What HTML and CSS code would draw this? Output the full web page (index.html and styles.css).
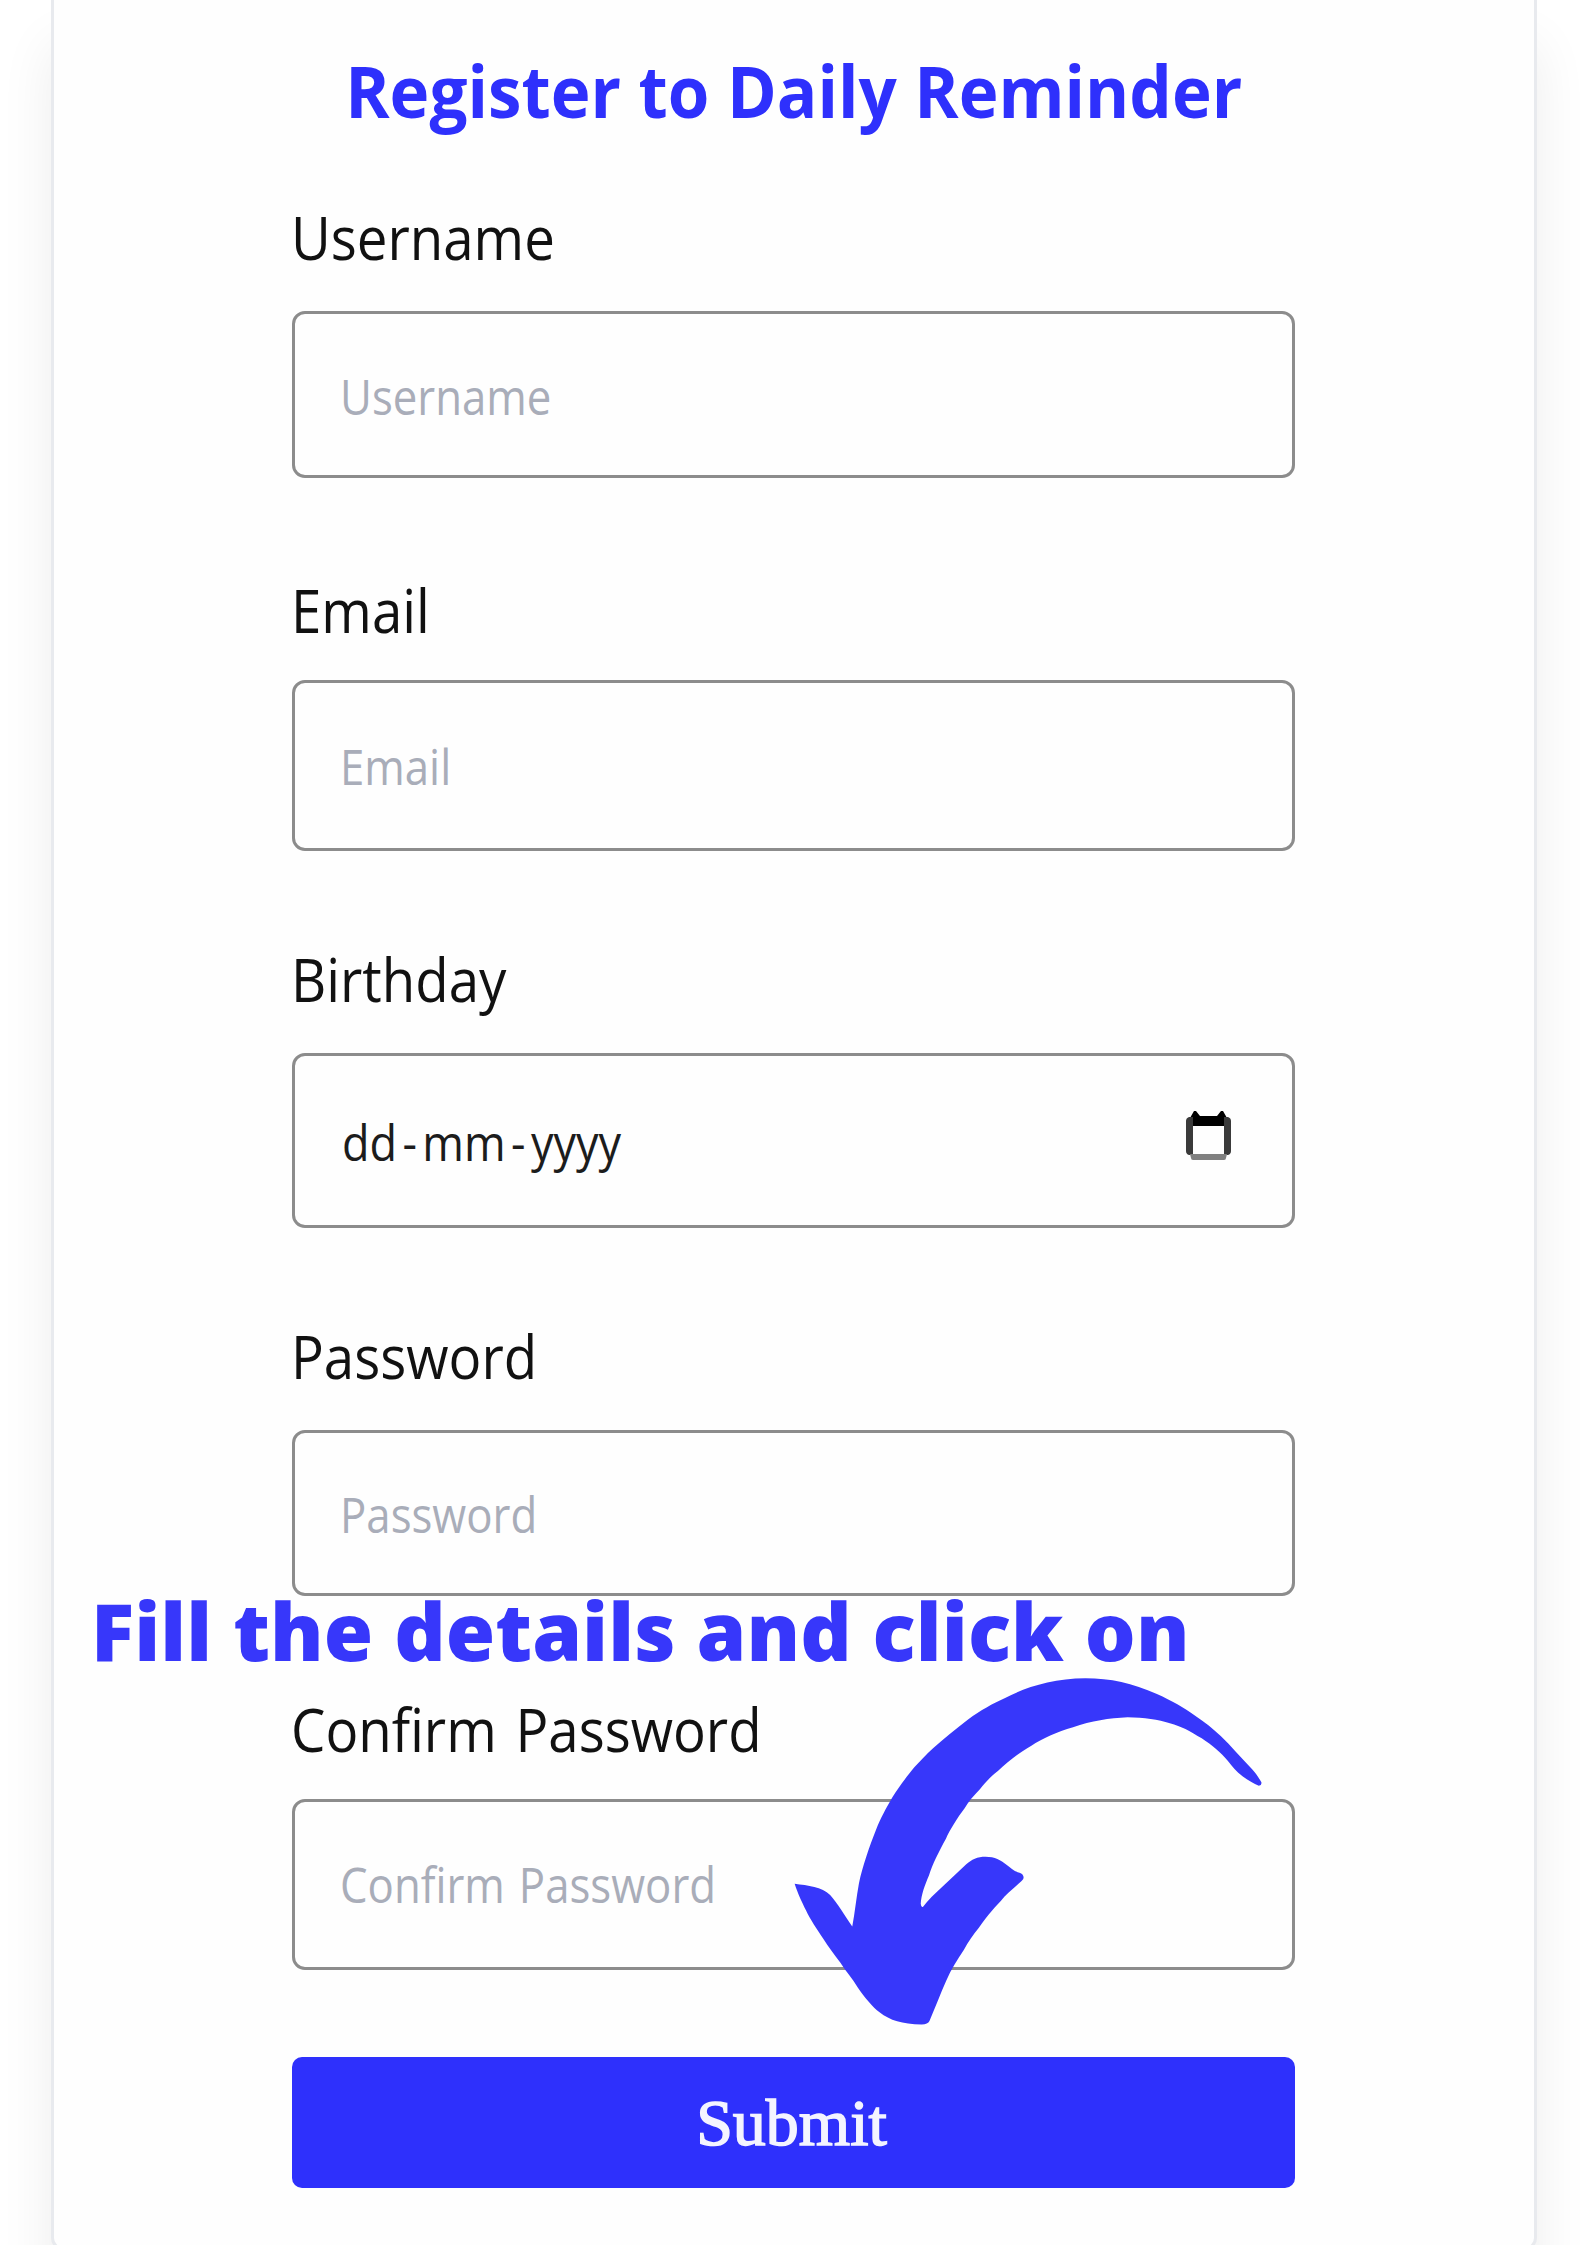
FILE: index.html
```html
<!DOCTYPE html>
<html lang="en">
<head>
<meta charset="utf-8">
<title>Register to Daily Reminder</title>
<link rel="stylesheet" href="styles.css">
</head>
<body>
<main class="card">
  <h1 class="title"><span>Register to Daily Reminder</span></h1>
  <form class="form">
    <div class="field username">
      <label class="label"><span>Username</span></label>
      <div class="input"><span class="placeholder">Username</span></div>
    </div>
    <div class="field email">
      <label class="label"><span>Email</span></label>
      <div class="input"><span class="placeholder">Email</span></div>
    </div>
    <div class="field birthday">
      <label class="label"><span>Birthday</span></label>
      <div class="input">
        <span class="date">dd<i>-</i>mm<i>-</i>yyyy</span>
        <svg class="calendar" viewBox="0 0 47 51" aria-hidden="true">
          <path d="M5 8L9 1h2l4 5h17l4-5h2l4 7v8H5z" fill="#000"/>
          <path d="M4 7h4v38H4q-3-1-3-4V11q0-3 3-4zM39 7h4q3 1 3 4v30q0 3-3 4h-4z" fill="#3a3a3a"/>
          <path d="M5 44h37l-1 4q0 2-2 2H8q-2 0-2-2z" fill="#808080"/>
        </svg>
      </div>
    </div>
    <div class="field password">
      <label class="label"><span>Password</span></label>
      <div class="input"><span class="placeholder">Password</span></div>
    </div>
    <div class="field confirm">
      <label class="label"><span>Confirm Password</span></label>
      <div class="input"><span class="placeholder">Confirm Password</span></div>
    </div>
    <button class="submit" type="button"><span>Submit</span></button>
  </form>
</main>
<p class="hint">Fill the details and click on</p>
<svg class="arrow" viewBox="20 260 930 810" preserveAspectRatio="none" aria-hidden="true">
  <path fill="#3737fa" d="M29 740C55 744 82 747 98 766C112 784 126 813 141 838C146 807 149 771 154 739C161 700 174 656 187 617C197 587 206 569 219 542C231 519 248 493 262 473C274 458 285 444 298 430C318 409 342 386 366 364C391 343 413 328 438 315C475 292 530 270 594 270C643 270 685 281 733 306C763 322 784 336 808 356C826 370 842 385 857 402C868 414 876 425 888 440L918 478C925 487 930 496 936 508Q937 515 931 516C915 507 902 498 891 486C881 475 873 461 865 451C851 434 834 416 812 402C785 380 741 360 676 359C640 361 606 367 570 382C539 392 510 409 489 424C463 442 444 460 424 482C408 497 399 509 389 524C376 540 367 552 359 568C346 588 331 616 323 637C309 667 297 695 290 721C282 743 275 765 274 786Q275 796 279 792C288 778 302 762 315 748L362 696C373 684 384 678 400 678C418 678 430 686 440 696C449 704 456 712 466 715C474 718 477 727 470 734C455 750 440 764 430 779C411 803 399 820 387 841C376 857 366 874 358 891C345 914 333 936 324 961C313 990 302 1024 291 1054Q288 1062 276 1062C237 1061 215 1053 194 1034C181 1023 164 999 152 978C142 958 128 940 118 921C106 902 95 886 84 865C73 845 59 822 51 801C43 781 36 765 29 740Z"/>
</svg>
</body>
</html>
```
FILE: styles.css
```css
* { box-sizing: border-box; }

body {
  position: relative;
  margin: 0;
  height: 2245px;
  overflow: hidden;
  background: #fff;
  font-family: "Open Sans", "Noto Sans", sans-serif;
}

.card {
  width: 1486px;
  height: 2266px;
  margin: -16px 0 0 51px;
  padding-top: 17px;
  border: 3px solid #e8eaee;
  border-radius: 12px;
  background: #fefefe;
  box-shadow: 0 60px 54px rgba(0, 0, 0, 0.075);
}

.title {
  height: 192px;
  margin: 0;
  padding-top: 36px;
  font-size: 72px;
  font-weight: 700;
  line-height: 100px;
  text-align: center;
  white-space: nowrap;
  color: #2e30fc;
}

.title span { display: inline-block; transform: scaleX(0.935); }

.form {
  display: flex;
  flex-direction: column;
  width: 1003px;
  margin-left: 238px;
}

.field { display: flex; flex-direction: column; }
.username { gap: 35px; }
.email { gap: 31px; margin-top: 90px; }
.birthday { gap: 35px; margin-top: 87px; }
.password { gap: 35px; margin-top: 87px; }
.confirm { gap: 31px; margin-top: 92px; }

.label {
  height: 80px;
  font-size: 60px;
  line-height: 82px;
  white-space: nowrap;
  word-spacing: 5px;
  color: #111;
}

.label span,
.placeholder,
.date {
  display: inline-block;
  transform-origin: 0 50%;
}

.label span { transform: translateX(-1px) scaleX(0.91); }

.input {
  display: flex;
  align-items: center;
  justify-content: space-between;
  height: 167px;
  margin-bottom: 1px;
  padding: 2px 60px 0 45px;
  border: 3px solid #8c8c8c;
  border-radius: 13px;
  font-size: 50px;
  white-space: nowrap;
}

.email .input { height: 171px; margin-bottom: 0; padding-top: 0; }
.birthday .input { height: 175px; margin-bottom: 0; padding-left: 47px; }
.password .input { height: 166px; margin-bottom: 0; }
.confirm .input { height: 171px; margin-bottom: 0; padding-top: 0; padding-bottom: 2px; }

.placeholder { color: #a9adb9; transform: scaleX(0.875); word-spacing: 3px; }
.date { color: #1c1c1c; transform: scaleX(0.9); }
.date i { margin: 0 6px; font-style: normal; }

.calendar { width: 47px; height: 51px; margin-bottom: 13px; }

.submit {
  height: 131px;
  margin-top: 87px;
  padding: 0 4px 0 0;
  border: 0;
  border-radius: 10px;
  background: #2e30fc;
  color: #f4f4ff;
  font-family: "Liberation Serif", serif;
  font-size: 66px;
  -webkit-text-stroke: 1.5px #f4f4ff;
}

.hint {
  position: absolute;
  top: 1580px;
  left: 91px;
  margin: 0;
  font-size: 80px;
  font-weight: 800;
  line-height: 100px;
  letter-spacing: 0.1px;
  white-space: nowrap;
  color: #3737fa;
}

.arrow {
  position: absolute;
  top: 1673.6px;
  left: 790.3px;
  width: 478.6px;
  height: 353.9px;
}
```
